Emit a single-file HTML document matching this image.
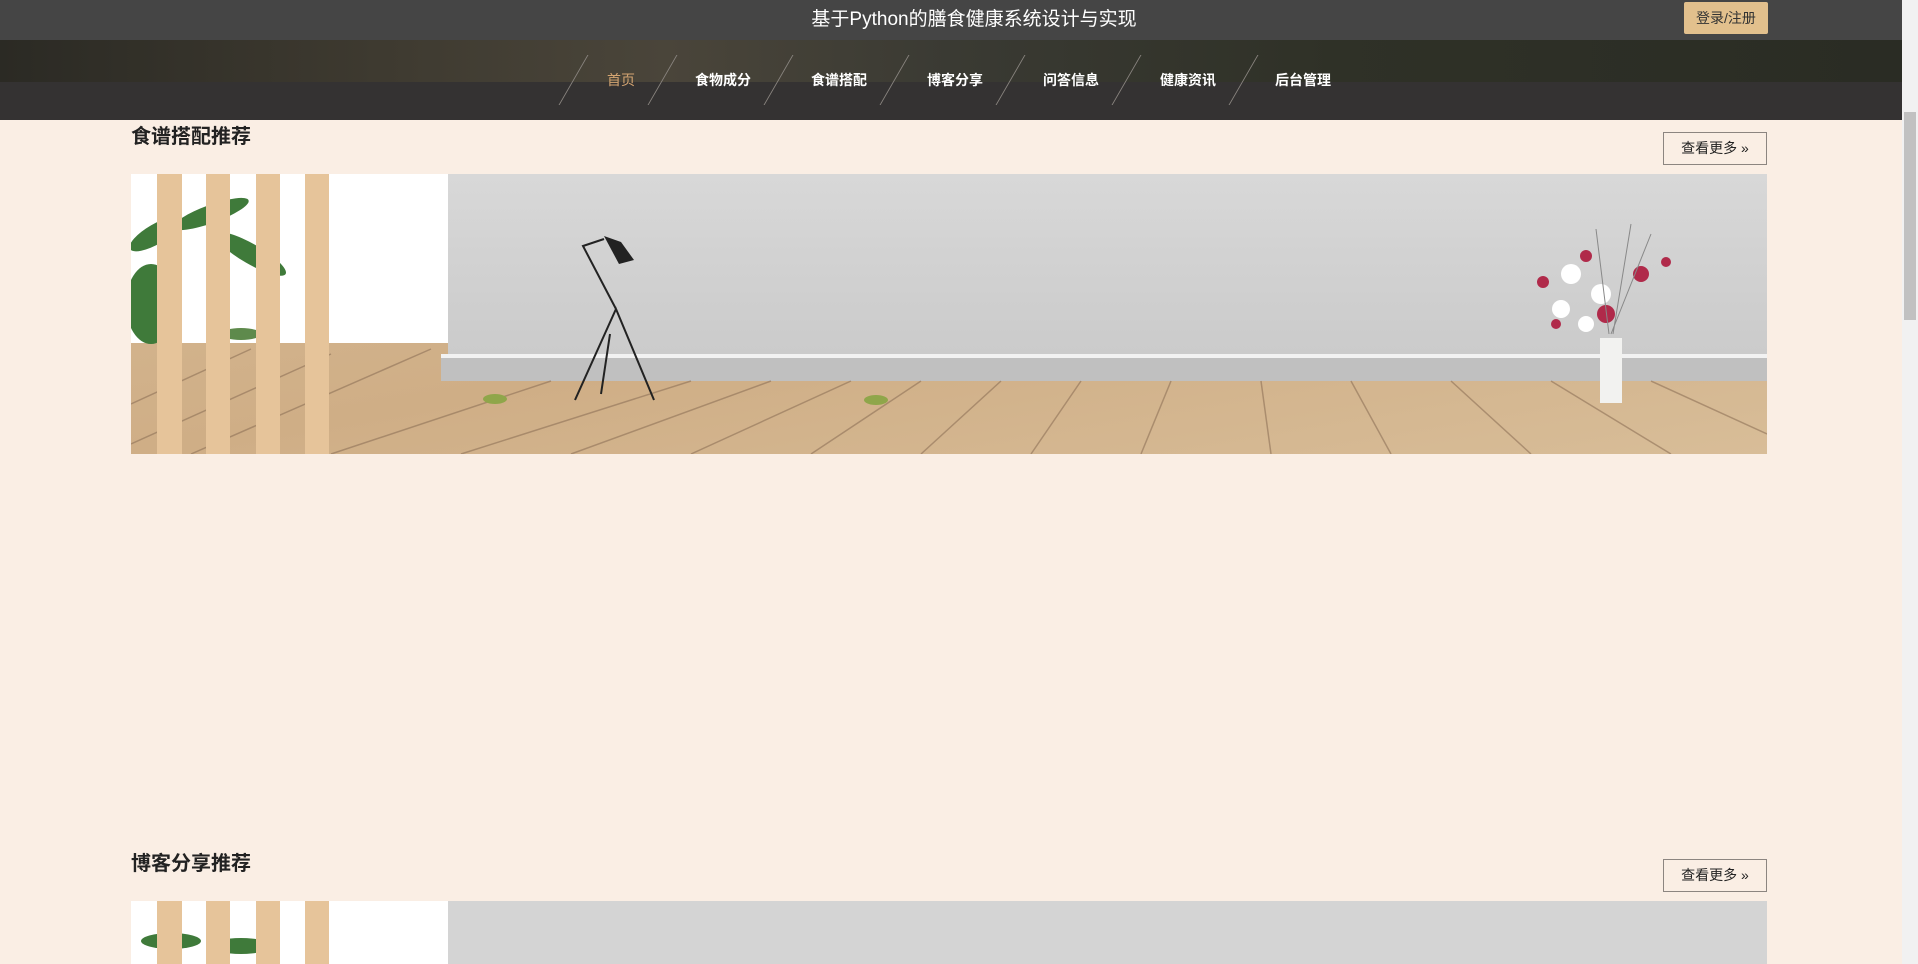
<!DOCTYPE html>
<html><head><meta charset="utf-8"><style>
*{margin:0;padding:0;box-sizing:border-box}
body{width:1918px;height:964px;overflow:hidden;background:#faeee4;font-family:"Liberation Sans","Noto Sans CJK SC",sans-serif;position:relative}
.top{position:absolute;left:0;top:0;width:1902px;height:40px;background:#454545}
.title{position:absolute;left:0;width:1948px;top:4px;text-align:center;color:#fff;font-size:19px}
.login{position:absolute;left:1684px;top:2px;width:84px;height:32px;background:#e2c08d;color:#333;font-size:14px;line-height:32px;text-align:center;border-radius:2px}
.navbg{position:absolute;left:0;top:40px;width:1902px;height:80px;background:#343232}
.trees{position:absolute;left:0;top:40px;width:1902px;height:42px;background:linear-gradient(90deg,#2b2a24,#3e3a30 20%,#4a453a 35%,#3a3a33 50%,#2f3127 70%,#2a2c24 100%)}
.nav{position:absolute;top:70px;color:#fff;font-size:14px;font-weight:bold}
.sl{position:absolute;top:55px;width:1px;height:50px;background:#8a8580;transform:skewX(-30deg)}
.h{position:absolute;left:131px;font-size:20px;font-weight:bold;color:#222}
.more{position:absolute;left:1663px;width:104px;height:33px;border:1px solid #8c8580;font-size:14px;line-height:31px;text-align:center;color:#222}
.img{position:absolute;left:131px;width:1636px;height:280px;overflow:hidden}
.sb{position:absolute;left:1902px;top:0;width:16px;height:964px;background:#f1f1f1}
.th{position:absolute;left:1904px;top:112px;width:12px;height:208px;background:#c1c1c1}
</style></head><body>
<div class="top"><div class="title">基于Python的膳食健康系统设计与实现</div><div class="login">登录/注册</div></div>
<div class="navbg"></div><div class="trees"></div>
<div class="sl" style="left:573px"></div><div class="sl" style="left:662px"></div><div class="sl" style="left:778px"></div><div class="sl" style="left:894px"></div><div class="sl" style="left:1010px"></div><div class="sl" style="left:1126px"></div><div class="sl" style="left:1243px"></div>
<div class="nav" style="left:607px;color:#d4a572;font-weight:normal">首页</div>
<div class="nav" style="left:695px">食物成分</div>
<div class="nav" style="left:811px">食谱搭配</div>
<div class="nav" style="left:927px">博客分享</div>
<div class="nav" style="left:1043px">问答信息</div>
<div class="nav" style="left:1160px">健康资讯</div>
<div class="nav" style="left:1275px">后台管理</div>

<div class="h" style="top:120px">食谱搭配推荐</div>
<div class="more" style="top:132px">查看更多 »</div>
<div class="img" style="top:174px"><svg width="1636" height="280" viewBox="0 0 1636 280">
<defs><linearGradient id="w" x1="0" y1="0" x2="0" y2="1"><stop offset="0" stop-color="#d8d8d8"/><stop offset="1" stop-color="#c9c9c9"/></linearGradient>
<linearGradient id="f" x1="0" y1="0" x2="1" y2="1"><stop offset="0" stop-color="#d6b994"/><stop offset=".5" stop-color="#cfae86"/><stop offset="1" stop-color="#d8bd98"/></linearGradient></defs>
<rect width="1636" height="280" fill="url(#f)"/>
<rect width="317" height="169" fill="#fff"/>
<rect x="317" width="1319" height="207" fill="url(#w)"/>
<rect x="310" y="180" width="1326" height="4" fill="#f2f2f2"/>
<rect x="310" y="184" width="1326" height="23" fill="#c0c0c0"/>
<g stroke="#8f7258" stroke-width="1.5" opacity=".6">
<path d="M0 230L120 175M0 270L200 180M60 280L300 175M200 280L420 207M330 280L560 207M440 280L640 207M560 280L720 207M680 280L790 207M790 280L870 207M900 280L950 207M1010 280L1040 207M1140 280L1130 207M1260 280L1220 207M1400 280L1320 207M1540 280L1420 207M1636 260L1520 207"/></g>
<g fill="#3f7a3a"><ellipse cx="25" cy="60" rx="30" ry="10" transform="rotate(-30 25 60)"/><ellipse cx="80" cy="40" rx="40" ry="9" transform="rotate(-20 80 40)"/><ellipse cx="120" cy="80" rx="40" ry="10" transform="rotate(30 120 80)"/><ellipse cx="20" cy="130" rx="25" ry="40"/><ellipse cx="110" cy="160" rx="20" ry="6" fill="#5e8a4c"/></g>
<g fill="#e6c49a"><rect x="26" width="25" height="280"/><rect x="75" width="24" height="280"/><rect x="125" width="24" height="280"/><rect x="174" width="24" height="280"/></g>
<g stroke="#222" stroke-width="2" fill="none"><path d="M444 226L485 135L523 226M470 220L479 160M485 135L452 72L473 65"/></g>
<path d="M473 62L490 68L503 86L488 90Z" fill="#222"/>
<ellipse cx="364" cy="225" rx="12" ry="5" fill="#8fa64a"/><ellipse cx="745" cy="226" rx="12" ry="5" fill="#8fa64a"/>
<rect x="1469" y="164" width="22" height="65" fill="#f2f2f0"/>
<g fill="#fff"><circle cx="1440" cy="100" r="10"/><circle cx="1430" cy="135" r="9"/><circle cx="1470" cy="120" r="10"/><circle cx="1455" cy="150" r="8"/></g>
<g fill="#b02a4a"><circle cx="1412" cy="108" r="6"/><circle cx="1455" cy="82" r="6"/><circle cx="1475" cy="140" r="9"/><circle cx="1510" cy="100" r="8"/><circle cx="1535" cy="88" r="5"/><circle cx="1425" cy="150" r="5"/></g>
<g stroke="#888" fill="none"><path d="M1478 160L1465 55M1482 160L1500 50M1480 160L1520 60"/></g>
</svg></div>

<div class="h" style="top:847px">博客分享推荐</div>
<div class="more" style="top:859px">查看更多 »</div>
<div class="img" style="top:901px;height:63px"><svg width="1636" height="63"><rect width="1636" height="63" fill="#d4d4d4"/><rect width="317" height="63" fill="#fff"/><g fill="#3f7a3a"><ellipse cx="40" cy="40" rx="30" ry="8"/><ellipse cx="110" cy="45" rx="30" ry="8"/></g><g fill="#e6c49a"><rect x="26" width="25" height="63"/><rect x="75" width="24" height="63"/><rect x="125" width="24" height="63"/><rect x="174" width="24" height="63"/></g></svg></div>
<div class="sb"></div><div class="th"></div>
</body></html>
